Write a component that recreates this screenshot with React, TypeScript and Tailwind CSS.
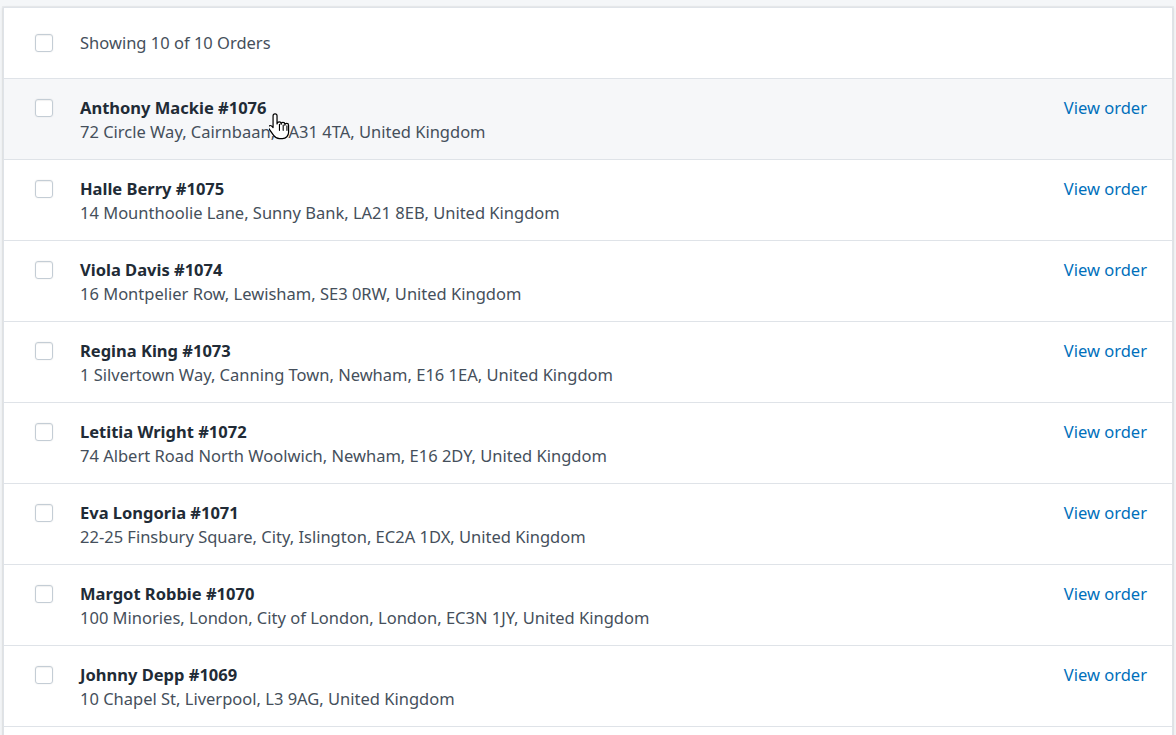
const orders = [
  { name: "Anthony Mackie", num: 1076, address: "72 Circle Way, Cairnbaan, PA31 4TA, United Kingdom" },
  { name: "Halle Berry", num: 1075, address: "14 Mounthoolie Lane, Sunny Bank, LA21 8EB, United Kingdom" },
  { name: "Viola Davis", num: 1074, address: "16 Montpelier Row, Lewisham, SE3 0RW, United Kingdom" },
  { name: "Regina King", num: 1073, address: "1 Silvertown Way, Canning Town, Newham, E16 1EA, United Kingdom" },
  { name: "Letitia Wright", num: 1072, address: "74 Albert Road North Woolwich, Newham, E16 2DY, United Kingdom" },
  { name: "Eva Longoria", num: 1071, address: "22-25 Finsbury Square, City, Islington, EC2A 1DX, United Kingdom" },
  { name: "Margot Robbie", num: 1070, address: "100 Minories, London, City of London, London, EC3N 1JY, United Kingdom" },
  { name: "Johnny Depp", num: 1069, address: "10 Chapel St, Liverpool, L3 9AG, United Kingdom" },
  { name: "Lupita Nyong'o", num: 1068, address: "3 Abbey Road, St John's Wood, NW8 9AY, United Kingdom" },
  { name: "Idris Elba", num: 1067, address: "5 Hackney Road, Hackney, E2 7NX, United Kingdom" },
];

function Checkbox() {
  return (
    <div className="w-[18px] h-[18px] shrink-0 rounded-[3px] border border-[#c4cdd5] bg-white shadow-[0_0_0_1px_rgba(0,0,0,0.02),inset_0_1px_1px_rgba(0,0,0,0.06)]" />
  );
}

function HandCursor() {
  return (
    <svg width="22" height="29" viewBox="0 0 20 26" className="absolute left-[265px] top-[104px] pointer-events-none">
      <path
        d="M5.5 1.5c-1 0-1.8.8-1.8 1.8V14l-1.2-1.3c-.8-.8-2-.8-2.6 0-.6.6-.5 1.6 0 2.3l4.3 6.1c1.2 1.7 2.8 2.9 5.3 2.9h2.7c3.3 0 5.6-2.6 5.6-5.8v-6.4c0-1-.8-1.7-1.7-1.7-.9 0-1.7.7-1.7 1.7v-.8c0-1-.8-1.7-1.7-1.7s-1.7.7-1.7 1.7v-.6c0-1-.8-1.7-1.7-1.7S7.3 9.7 7.3 10.7V3.3c0-1-.8-1.8-1.8-1.8z"
        fill="#fff"
        stroke="#000"
        strokeWidth="1.1"
        strokeLinejoin="round"
      />
      <path d="M9.5 11v5.5M12.9 11.6v4.9M16.3 12.4v4.1" stroke="#000" strokeWidth="1" strokeLinecap="round" />
    </svg>
  );
}

export default function App() {
  return (
    <div className="min-h-screen bg-[#f4f6f8] pt-[7px] px-[3px] font-['Segoe_UI','Noto_Sans',sans-serif] text-[16.5px] leading-[24px]">
      <div className="relative bg-white border border-[#dfe3e8] shadow-[0_0_0_1px_rgba(63,63,68,0.05),0_1px_3px_0_rgba(63,63,68,0.15)]">
        <div className="flex items-center pl-[31px] pr-[25px] py-[23px] border-b border-[#dfe3e8]">
          <Checkbox />
          <span className="ml-[27px] text-[#454f5b]">Showing 10 of 10 Orders</span>
        </div>
        {orders.map((o, i) => (
          <div
            key={o.num}
            className={`flex items-start pl-[31px] pr-[25px] pt-[17px] pb-[15px] border-b border-[#dfe3e8] ${i === 0 ? "bg-[#f6f7f9]" : ""}`}
          >
            <div className="pt-[3px]">
              <Checkbox />
            </div>
            <div className="ml-[27px] flex-1 min-w-0">
              <div className="font-bold text-[#212b36]">
                {o.name} #{o.num}
              </div>
              <div className="text-[#454f5b]">{o.address}</div>
            </div>
            <a className="text-[#006fbb] shrink-0">View order</a>
          </div>
        ))}
        <HandCursor />
      </div>
    </div>
  );
}
